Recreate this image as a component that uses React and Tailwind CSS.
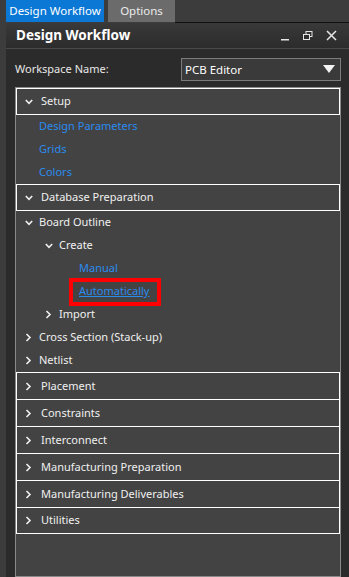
import React from 'react';

const font = { fontFamily: '"Noto Sans", "Open Sans", sans-serif' };

function ChevronDown() {
  return (
    <svg width="8" height="8" viewBox="0 0 8 8" className="shrink-0">
      <polyline points="0.8,2 4,5.3 7.2,2" fill="none" stroke="#f0f0f0" strokeWidth="1.6" />
    </svg>
  );
}

function ChevronRight() {
  return (
    <svg width="8" height="9" viewBox="0 0 8 9" className="shrink-0">
      <polyline points="1.5,1 5,4.5 1.5,8" fill="none" stroke="#f0f0f0" strokeWidth="1.6" />
    </svg>
  );
}

function Header({ label, open, bottom }) {
  return (
    <div
      className={`flex items-center border-x border-t border-white bg-[#434343] pl-[8px] text-[11px] text-[#f0f0f0] ${
        bottom ? 'h-[27px] border-b' : 'h-[27px]'
      }`}
    >
      {open ? <ChevronDown /> : <ChevronRight />}
      <span className="ml-[8px]">{label}</span>
    </div>
  );
}

function Link({ label, indent }) {
  return (
    <div className={`flex h-[23px] items-center text-[11px] text-[#2a8bef] ${indent}`}>{label}</div>
  );
}

function Node({ label, open, indent }) {
  return (
    <div className={`flex h-[23px] items-center text-[11px] text-[#f0f0f0] ${indent}`}>
      {open ? <ChevronDown /> : <ChevronRight />}
      <span className="ml-[6px]">{label}</span>
    </div>
  );
}

export default function App() {
  return (
    <div className="flex h-[577px] w-[349px] flex-col overflow-hidden bg-[#3c3c3c]" style={font}>
      {/* Tabs */}
      <div className="flex h-[23px] shrink-0 items-start">
        <div className="ml-[6px] flex h-[22px] w-[98px] items-center justify-center bg-[#0b78d6] text-[11.5px] text-white">
          Design Workflow
        </div>
        <div className="ml-[4px] flex h-[22px] w-[67px] items-center justify-center bg-[#6b6b6b] text-[11.5px] text-[#ececec]">
          Options
        </div>
        <div className="mt-[22px] h-px flex-1 bg-[#111]" />
      </div>

      {/* Panel */}
      <div className="ml-[6px] flex flex-1 flex-col bg-[#2b2b2b]">
        {/* Title bar */}
        <div className="flex h-[26px] shrink-0 items-center border-b border-[#4a4a4a] bg-gradient-to-b from-[#393939] to-[#2c2c2c] pl-[10px] pr-[12px]">
          <span className="text-[13.5px] font-bold text-white">Design Workflow</span>
          <div className="ml-auto flex items-center gap-[13px]">
            <svg width="10" height="10" viewBox="0 0 10 10">
              <rect x="1" y="8" width="8" height="1.5" fill="#e6e6e6" />
            </svg>
            <svg width="10" height="10" viewBox="0 0 10 10">
              <rect x="3" y="0.5" width="6" height="5" fill="none" stroke="#e6e6e6" strokeWidth="1" />
              <rect x="0.5" y="3.5" width="6" height="5" fill="#2f2f2f" stroke="#e6e6e6" strokeWidth="1" />
            </svg>
            <svg width="11" height="11" viewBox="0 0 11 11">
              <path d="M1 1 L10 10 M10 1 L1 10" stroke="#e6e6e6" strokeWidth="1.5" />
            </svg>
          </div>
        </div>

        {/* Workspace row */}
        <div className="flex h-[38px] shrink-0 items-center pl-[9px] pr-[8px] pt-[3px]">
          <span className="text-[11px] text-[#e8e8e8]">Workspace Name:</span>
          <div className="ml-auto flex h-[23px] w-[160px] items-center border border-[#7c7c7c] bg-[#3a3a3a] pl-[3px] pr-[5px] text-[11.5px] text-white">
            PCB Editor
            <svg width="12" height="9" viewBox="0 0 12 9" className="ml-auto">
              <polygon points="0,0 12,0 6,8" fill="#f2f2f2" />
            </svg>
          </div>
        </div>

        {/* Tree */}
        <div className="ml-[9px] mr-[8px] flex-1 border border-[#8a8a8a] bg-[#434343]">
          <Header label="Setup" open bottom />
          <Link label="Design Parameters" indent="pl-[23px]" />
          <Link label="Grids" indent="pl-[23px]" />
          <Link label="Colors" indent="pl-[23px]" />
          <Header label="Database Preparation" open bottom />
          <Node label="Board Outline" open indent="pl-[9px]" />
          <Node label="Create" open indent="pl-[29px]" />
          <Link label="Manual" indent="pl-[63px]" />
          <div className="relative flex h-[23px] items-center pl-[63px] text-[11px] text-[#2a8bef]">
            <span className="underline">Automatically</span>
            <div className="absolute left-[53px] top-[-2px] h-[28px] w-[92px] border-[4px] border-[#ff0000]" />
          </div>
          <Node label="Import" indent="pl-[29px]" />
          <Node label="Cross Section (Stack-up)" indent="pl-[9px]" />
          <Node label="Netlist" indent="pl-[9px]" />
          <Header label="Placement" />
          <Header label="Constraints" />
          <Header label="Interconnect" />
          <Header label="Manufacturing Preparation" />
          <Header label="Manufacturing Deliverables" />
          <Header label="Utilities" bottom />
        </div>
      </div>
    </div>
  );
}
